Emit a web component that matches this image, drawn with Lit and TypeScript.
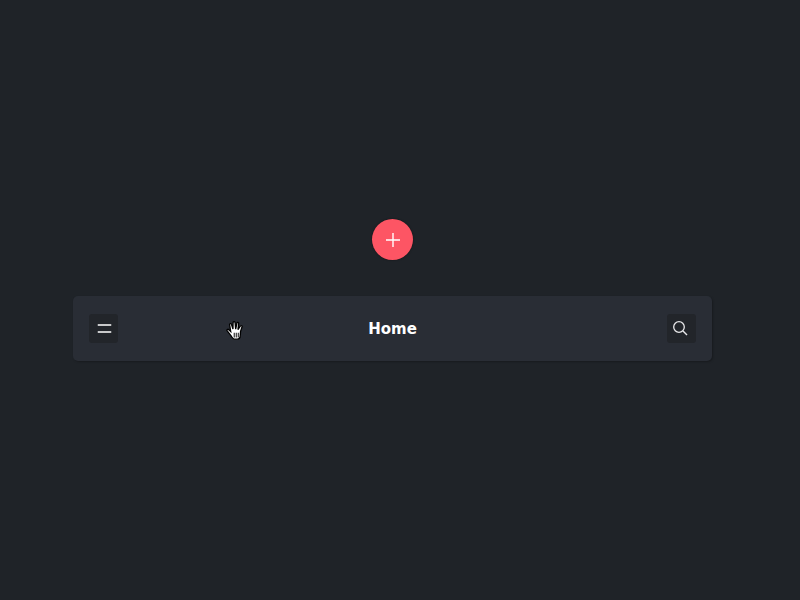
import { LitElement, html, css } from "lit";
import { customElement } from "lit/decorators.js";

@customElement("app-root")
export class AppRoot extends LitElement {
  static styles = css`
    :host {
      display: block;
      height: 600px;
      background: #1f2328;
      font-family: "DejaVu Sans", "Liberation Sans", sans-serif;
    }
    .page {
      display: flex;
      flex-direction: column;
      align-items: center;
      padding-top: 219px;
      padding-right: 15px;
      gap: 36px;
    }
    .fab {
      width: 41px;
      height: 41px;
      border-radius: 50%;
      background: #fd5564;
      box-shadow: 0 0 2px rgba(0, 0, 0, 0.5);
      display: flex;
      align-items: center;
      justify-content: center;
    }
    .bar {
      position: relative;
      width: 639px;
      height: 65px;
      box-sizing: border-box;
      padding: 0 16px;
      border-radius: 5px;
      background: #292d35;
      box-shadow: 1px 1px 2px rgba(0, 0, 0, 0.25);
      display: flex;
      align-items: center;
      justify-content: space-between;
    }
    .btn {
      width: 29px;
      height: 29px;
      border-radius: 3px;
      background: #22252a;
      display: flex;
      align-items: center;
      justify-content: center;
    }
    .title {
      color: #fff;
      font-size: 15px;
      font-weight: 700;
    }
    .menu {
      transform: translateX(0.5px);
    }
    .search {
      transform: translate(-1px, -1px);
    }
    .cursor {
      position: absolute;
      left: 153px;
      top: 25px;
      display: block;
    }
  `;

  render() {
    return html`
      <div class="page">
        <div class="fab">
          <svg width="16" height="16" viewBox="0 0 16 16">
            <path d="M8 1v14M1 8h14" stroke="#fff" stroke-width="1.4" fill="none" />
          </svg>
        </div>
        <div class="bar">
          <div class="btn">
            <svg class="menu" width="14" height="9" viewBox="0 0 14 9">
              <path d="M0 1h14M0 8h14" stroke="#fff" stroke-width="1.4" fill="none" />
            </svg>
          </div>
          <div class="title">Home</div>
          <div class="btn">
            <svg class="search" width="16" height="16" viewBox="0 0 16 16" fill="none">
              <circle cx="7" cy="7" r="5.3" stroke="#e8e8ea" stroke-width="1.3" />
              <path d="M11 11l4 4" stroke="#e8e8ea" stroke-width="1.4" />
            </svg>
          </div>
          <svg class="cursor" width="17" height="19" viewBox="0.7 1.2 14 16">
            <path
              d="M5 14 1.6 9.600c-.7-1 .5-1.900 1.300-1.100L4.500 10 3.600 4.400c-.2-1.200 1.300-1.400 1.600-.3L6.400 8 6.500 2.600c0-1.200 1.600-1.200 1.700 0L8.700 8l1-4.900c.3-1.100 1.700-.8 1.500.3L10.600 8.500l2-3c.7-.9 1.900-.2 1.400.8L12.800 10 12.500 14c-.1 1.500-1 2.500-2.500 2.500H7.500C6.500 16.500 5.800 15.200 5 14Z"
              fill="#fff"
              stroke="#000"
              stroke-width="1.1"
            />
            <path d="M7.500 11v4M9.200 11v4M10.900 11v4" stroke="#333" stroke-width="1" fill="none" />
          </svg>
        </div>
      </div>
    `;
  }
}
